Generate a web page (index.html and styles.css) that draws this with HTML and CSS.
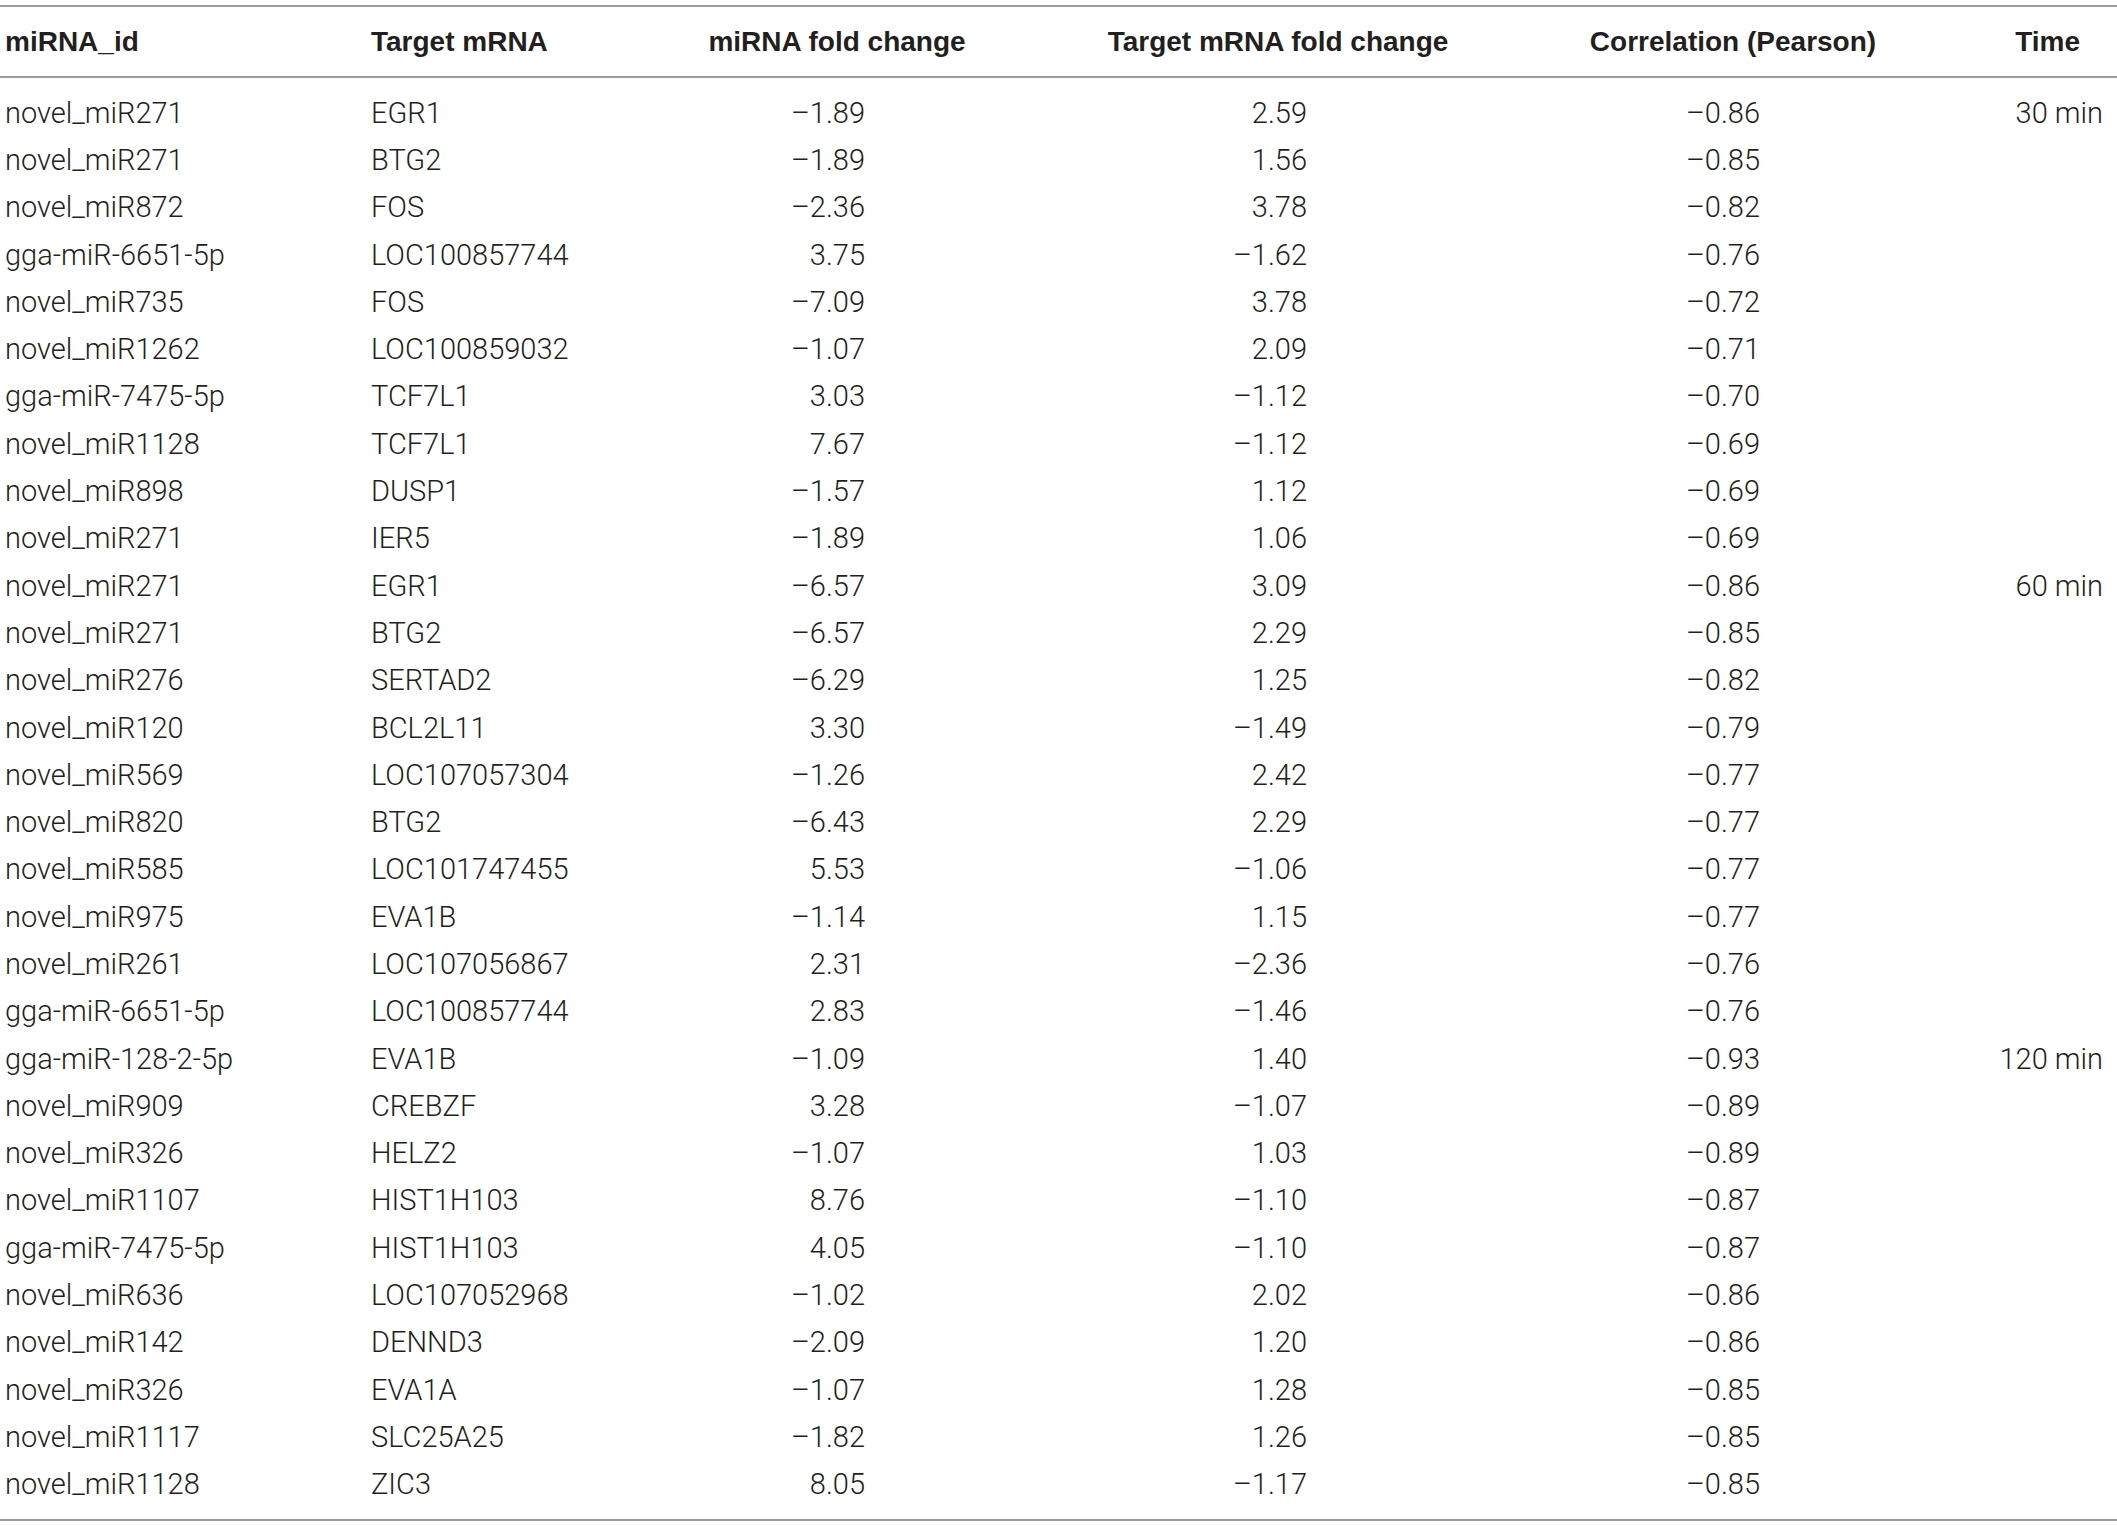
FILE: index.html
```html
<!DOCTYPE html>
<html lang="en">
<head>
  <meta charset="UTF-8" />
  <title>miRNA targets</title>
  <link rel="stylesheet" href="styles.css">
</head>
<body>

  <div class="table">
    <div class="row head">
      <div class="cell">miRNA_id</div>
      <div class="cell">Target mRNA</div>
      <div class="cell num">miRNA fold change</div>
      <div class="cell num">Target mRNA fold change</div>
      <div class="cell num">Correlation (Pearson)</div>
      <div class="cell time">Time</div>
    </div>

    <div class="body">
      <div class="row"><div class="cell">novel_miR271</div><div class="cell">EGR1</div><div class="cell num">–1.89</div><div class="cell num">2.59</div><div class="cell num">–0.86</div><div class="cell time">30 min</div></div>
      <div class="row"><div class="cell">novel_miR271</div><div class="cell">BTG2</div><div class="cell num">–1.89</div><div class="cell num">1.56</div><div class="cell num">–0.85</div><div class="cell time"></div></div>
      <div class="row"><div class="cell">novel_miR872</div><div class="cell">FOS</div><div class="cell num">–2.36</div><div class="cell num">3.78</div><div class="cell num">–0.82</div><div class="cell time"></div></div>
      <div class="row"><div class="cell">gga-miR-6651-5p</div><div class="cell">LOC100857744</div><div class="cell num">3.75</div><div class="cell num">–1.62</div><div class="cell num">–0.76</div><div class="cell time"></div></div>
      <div class="row"><div class="cell">novel_miR735</div><div class="cell">FOS</div><div class="cell num">–7.09</div><div class="cell num">3.78</div><div class="cell num">–0.72</div><div class="cell time"></div></div>
      <div class="row"><div class="cell">novel_miR1262</div><div class="cell">LOC100859032</div><div class="cell num">–1.07</div><div class="cell num">2.09</div><div class="cell num">–0.71</div><div class="cell time"></div></div>
      <div class="row"><div class="cell">gga-miR-7475-5p</div><div class="cell">TCF7L1</div><div class="cell num">3.03</div><div class="cell num">–1.12</div><div class="cell num">–0.70</div><div class="cell time"></div></div>
      <div class="row"><div class="cell">novel_miR1128</div><div class="cell">TCF7L1</div><div class="cell num">7.67</div><div class="cell num">–1.12</div><div class="cell num">–0.69</div><div class="cell time"></div></div>
      <div class="row"><div class="cell">novel_miR898</div><div class="cell">DUSP1</div><div class="cell num">–1.57</div><div class="cell num">1.12</div><div class="cell num">–0.69</div><div class="cell time"></div></div>
      <div class="row"><div class="cell">novel_miR271</div><div class="cell">IER5</div><div class="cell num">–1.89</div><div class="cell num">1.06</div><div class="cell num">–0.69</div><div class="cell time"></div></div>
      <div class="row"><div class="cell">novel_miR271</div><div class="cell">EGR1</div><div class="cell num">–6.57</div><div class="cell num">3.09</div><div class="cell num">–0.86</div><div class="cell time">60 min</div></div>
      <div class="row"><div class="cell">novel_miR271</div><div class="cell">BTG2</div><div class="cell num">–6.57</div><div class="cell num">2.29</div><div class="cell num">–0.85</div><div class="cell time"></div></div>
      <div class="row"><div class="cell">novel_miR276</div><div class="cell">SERTAD2</div><div class="cell num">–6.29</div><div class="cell num">1.25</div><div class="cell num">–0.82</div><div class="cell time"></div></div>
      <div class="row"><div class="cell">novel_miR120</div><div class="cell">BCL2L11</div><div class="cell num">3.30</div><div class="cell num">–1.49</div><div class="cell num">–0.79</div><div class="cell time"></div></div>
      <div class="row"><div class="cell">novel_miR569</div><div class="cell">LOC107057304</div><div class="cell num">–1.26</div><div class="cell num">2.42</div><div class="cell num">–0.77</div><div class="cell time"></div></div>
      <div class="row"><div class="cell">novel_miR820</div><div class="cell">BTG2</div><div class="cell num">–6.43</div><div class="cell num">2.29</div><div class="cell num">–0.77</div><div class="cell time"></div></div>
      <div class="row"><div class="cell">novel_miR585</div><div class="cell">LOC101747455</div><div class="cell num">5.53</div><div class="cell num">–1.06</div><div class="cell num">–0.77</div><div class="cell time"></div></div>
      <div class="row"><div class="cell">novel_miR975</div><div class="cell">EVA1B</div><div class="cell num">–1.14</div><div class="cell num">1.15</div><div class="cell num">–0.77</div><div class="cell time"></div></div>
      <div class="row"><div class="cell">novel_miR261</div><div class="cell">LOC107056867</div><div class="cell num">2.31</div><div class="cell num">–2.36</div><div class="cell num">–0.76</div><div class="cell time"></div></div>
      <div class="row"><div class="cell">gga-miR-6651-5p</div><div class="cell">LOC100857744</div><div class="cell num">2.83</div><div class="cell num">–1.46</div><div class="cell num">–0.76</div><div class="cell time"></div></div>
      <div class="row"><div class="cell">gga-miR-128-2-5p</div><div class="cell">EVA1B</div><div class="cell num">–1.09</div><div class="cell num">1.40</div><div class="cell num">–0.93</div><div class="cell time">120 min</div></div>
      <div class="row"><div class="cell">novel_miR909</div><div class="cell">CREBZF</div><div class="cell num">3.28</div><div class="cell num">–1.07</div><div class="cell num">–0.89</div><div class="cell time"></div></div>
      <div class="row"><div class="cell">novel_miR326</div><div class="cell">HELZ2</div><div class="cell num">–1.07</div><div class="cell num">1.03</div><div class="cell num">–0.89</div><div class="cell time"></div></div>
      <div class="row"><div class="cell">novel_miR1107</div><div class="cell">HIST1H103</div><div class="cell num">8.76</div><div class="cell num">–1.10</div><div class="cell num">–0.87</div><div class="cell time"></div></div>
      <div class="row"><div class="cell">gga-miR-7475-5p</div><div class="cell">HIST1H103</div><div class="cell num">4.05</div><div class="cell num">–1.10</div><div class="cell num">–0.87</div><div class="cell time"></div></div>
      <div class="row"><div class="cell">novel_miR636</div><div class="cell">LOC107052968</div><div class="cell num">–1.02</div><div class="cell num">2.02</div><div class="cell num">–0.86</div><div class="cell time"></div></div>
      <div class="row"><div class="cell">novel_miR142</div><div class="cell">DENND3</div><div class="cell num">–2.09</div><div class="cell num">1.20</div><div class="cell num">–0.86</div><div class="cell time"></div></div>
      <div class="row"><div class="cell">novel_miR326</div><div class="cell">EVA1A</div><div class="cell num">–1.07</div><div class="cell num">1.28</div><div class="cell num">–0.85</div><div class="cell time"></div></div>
      <div class="row"><div class="cell">novel_miR1117</div><div class="cell">SLC25A25</div><div class="cell num">–1.82</div><div class="cell num">1.26</div><div class="cell num">–0.85</div><div class="cell time"></div></div>
      <div class="row"><div class="cell">novel_miR1128</div><div class="cell">ZIC3</div><div class="cell num">8.05</div><div class="cell num">–1.17</div><div class="cell num">–0.85</div><div class="cell time"></div></div>
    </div>
  </div>

</body>
</html>
```

FILE: styles.css
```css
:root {
  --ink: #231f20;
  --rule: #9b9b9b;
}

* {
  box-sizing: border-box;
  margin: 0;
  padding: 0;
}

body {
  background: #ffffff;
  color: var(--ink);
  font-family: 'Liberation Sans', Arial, sans-serif;
}

.table {
  width: 2117px;
  padding-top: 5px;
}

.row {
  display: grid;
  grid-template-columns: 366px 284px 374px 508px 402px 1fr;
  align-items: center;
}

.head {
  height: 73px;
  border-top: 2px solid var(--rule);
  border-bottom: 2px solid var(--rule);
  font-weight: bold;
  font-size: 28px;
}

.body {
  padding: 11px 0;
  border-bottom: 2px solid var(--rule);
  font-family: Roboto, 'Liberation Sans', sans-serif;
  font-weight: 300;
  font-size: 29px;
}

.body .row {
  height: 47.3px;
}

.cell {
  padding-left: 5px;
  white-space: nowrap;
}

.head .num {
  text-align: center;
  padding-left: 0;
}

.head .time {
  text-align: right;
  padding-right: 37px;
}

.body .num {
  text-align: right;
  padding-left: 0;
}

.body .num:nth-child(3) { padding-right: 159px; }
.body .num:nth-child(4) { padding-right: 225px; }
.body .num:nth-child(5) { padding-right: 174px; }

.body .time {
  text-align: right;
  padding-right: 14px;
}
```
